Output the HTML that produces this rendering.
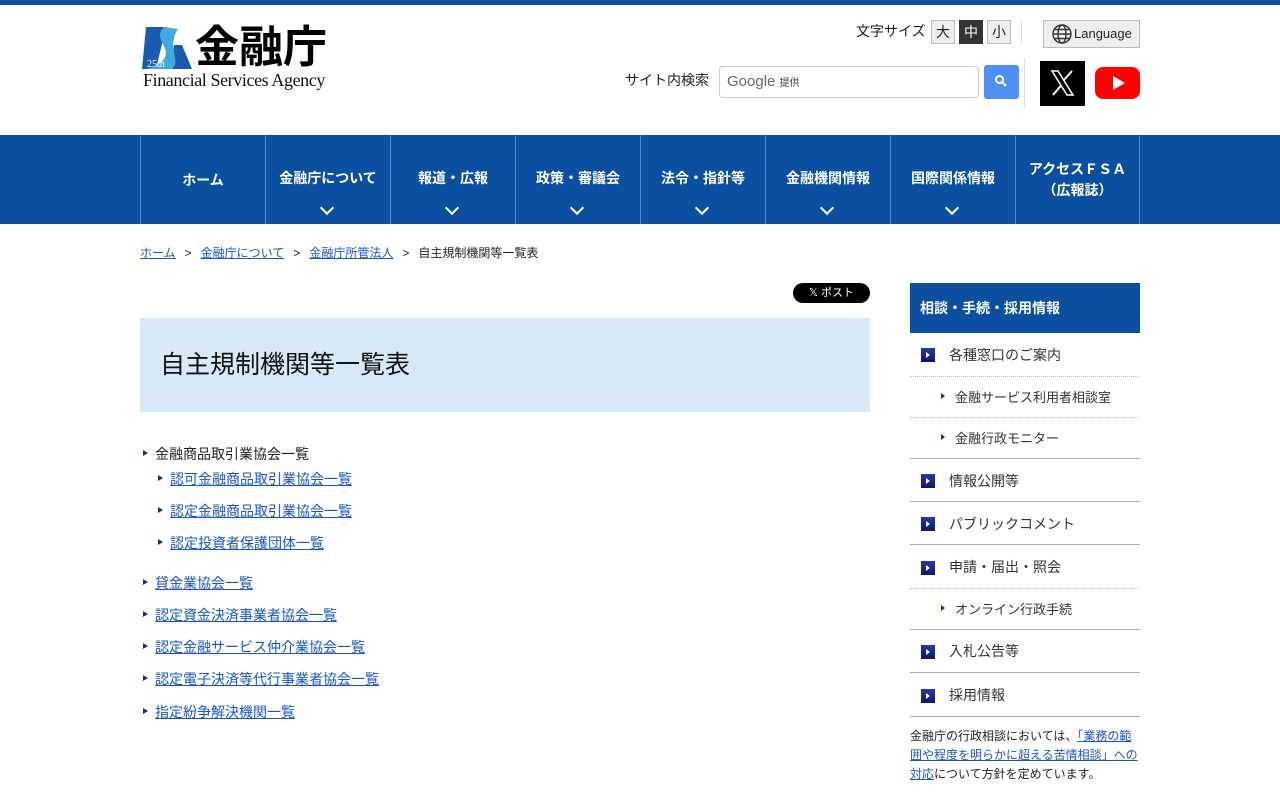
<!DOCTYPE html>
<html><head><meta charset="utf-8"><style>
*{margin:0;padding:0;box-sizing:border-box}
body{width:1280px;height:800px;overflow:hidden;background:#fff;font-family:"Liberation Sans","Noto Sans CJK JP",sans-serif;color:#222;position:relative}
.abs{position:absolute}
a{color:#1a56c8;text-decoration:underline}
.topbar{left:0;top:0;width:1280px;height:5px;background:#0b4fa1}
.nav{left:0;top:135px;width:1280px;height:89px;background:#0b4fa1}
.nav .it{position:absolute;top:0;height:89px;width:125px;border-left:1px solid #5a86c4;color:#fff;font-weight:bold;font-size:14px;text-align:center}
.nav .it span{position:absolute;left:0;right:0;top:34px;line-height:18px}
.chev{position:absolute;left:56px;top:68px;width:10px;height:10px;border-right:2px solid #fff;border-bottom:2px solid #fff;transform:rotate(45deg)}
.fs{top:20px;width:24px;height:24px;border:1px solid #bbb;background:#eee;font-size:14px;text-align:center;line-height:22px}
.tri{display:inline-block;width:0;height:0;border-left:5px solid #1a2a8a;border-top:3.5px solid transparent;border-bottom:3.5px solid transparent;position:absolute}
.li{position:absolute;font-size:14px;line-height:18px}
.sq{position:absolute;left:11px;width:14px;height:14px;background:linear-gradient(#2a3aa8,#0a1470)}
.sq:after{content:"";position:absolute;left:5px;top:4px;border-left:4px solid #fff;border-top:3px solid transparent;border-bottom:3px solid transparent}
.srow{position:absolute;left:910px;width:230px;font-size:14px;color:#333}
</style></head><body>
<div class="abs topbar"></div>
<svg class="abs" style="left:142px;top:25px" width="50" height="46" viewBox="0 0 50 46">
<polygon points="4,2 24,2 14,44 0,44" fill="#1a5bb0"/>
<polygon points="32,20 40,20 50,44 30,44" fill="#1a5bb0"/>
<path d="M22,2 C10,14 30,22 22,34 C18,40 10,42 4,44 L30,44 C40,36 24,22 36,4 Z" fill="#3fa9e0"/>
<text x="5" y="42" font-size="10" fill="#fff" font-family="Liberation Serif">25th</text>
</svg>
<div class="abs" style="left:195px;top:24px;font-size:44px;font-weight:bold;letter-spacing:0px;line-height:48px;color:#000">金融庁</div>
<div class="abs" style="left:143px;top:70px;font-family:'Liberation Serif',serif;font-size:18px;color:#111;letter-spacing:-0.4px;line-height:20px">Financial Services Agency</div>
<div class="abs" style="left:856px;top:21px;font-size:14px">文字サイズ</div>
<div class="abs fs" style="left:931px">大</div>
<div class="abs fs" style="left:959px;background:#333;color:#fff;border-color:#333">中</div>
<div class="abs fs" style="left:987px">小</div>
<div class="abs" style="left:1021px;top:20px;width:1px;height:24px;background:#ddd"></div>
<div class="abs" style="left:1043px;top:20px;width:97px;height:28px;border:1px solid #bbb;background:#eee;font-size:13px;line-height:26px;padding-left:30px">Language</div>
<svg class="abs" style="left:1051px;top:23px" width="22" height="22" viewBox="0 0 22 22" fill="none" stroke="#333" stroke-width="1.4"><circle cx="11" cy="11" r="9"/><ellipse cx="11" cy="11" rx="4" ry="9"/><line x1="2" y1="11" x2="20" y2="11"/><path d="M3.5 6.5h15M3.5 15.5h15"/></svg>
<div class="abs" style="left:625px;top:70px;font-size:14px">サイト内検索</div>
<div class="abs" style="left:719px;top:66px;width:260px;height:32px;border:1px solid #ccc;border-radius:4px;font-size:15px;color:#666;line-height:30px;padding-left:7px">Google <span style="font-size:10px;color:#444">提供</span></div>
<div class="abs" style="left:984px;top:65px;width:35px;height:34px;background:#4d8ff5;border-radius:3px"></div>
<svg class="abs" style="left:994px;top:74px" width="14" height="14" viewBox="0 0 14 14" fill="none" stroke="#fff" stroke-width="2"><circle cx="5.5" cy="5.5" r="3.5"/><line x1="8" y1="8" x2="12" y2="12"/></svg>
<div class="abs" style="left:1024px;top:58px;width:1px;height:50px;background:#ddd"></div>
<div class="abs" style="left:1040px;top:61px;width:45px;height:45px;background:#000"></div>
<svg class="abs" style="left:1050px;top:70px" width="25" height="26" viewBox="0 0 25 26"><path d="M2 1h6l15 24h-6z" fill="none" stroke="#fff" stroke-width="1.5"/><path d="M22 1L14 10M3 25l8-9.5" stroke="#fff" stroke-width="2"/></svg>
<div class="abs" style="left:1095px;top:67px;width:45px;height:32px;background:#f00;border-radius:8px"></div>
<div class="abs" style="left:1113px;top:76px;border-left:12px solid #fff;border-top:7px solid transparent;border-bottom:7px solid transparent"></div>
<div class="abs nav">
<div class="it" style="left:140px"><span style="top:36px">ホーム</span></div>
<div class="it" style="left:265px"><span>金融庁について</span><i class="chev"></i></div>
<div class="it" style="left:390px"><span>報道・広報</span><i class="chev"></i></div>
<div class="it" style="left:515px"><span>政策・審議会</span><i class="chev"></i></div>
<div class="it" style="left:640px"><span>法令・指針等</span><i class="chev"></i></div>
<div class="it" style="left:765px"><span>金融機関情報</span><i class="chev"></i></div>
<div class="it" style="left:890px"><span>国際関係情報</span><i class="chev"></i></div>
<div class="it" style="left:1015px;border-right:1px solid #5a86c4"><span style="top:24px;line-height:21px">アクセスＦＳＡ<br>（広報誌）</span></div>
</div>
<div class="abs" style="left:140px;top:244px;font-size:12px;line-height:18px;color:#222;word-spacing:0"><a href="#">ホーム</a><span style="margin:0 9px">&gt;</span><a href="#">金融庁について</a><span style="margin:0 9px">&gt;</span><a href="#">金融庁所管法人</a><span style="margin:0 9px">&gt;</span>自主規制機関等一覧表</div>
<div class="abs" style="left:793px;top:283px;width:77px;height:20px;background:#000;border-radius:10px;color:#fff;font-size:11px;text-align:center;line-height:20px">𝕏 ポスト</div>
<div class="abs" style="left:140px;top:318px;width:730px;height:94px;background:#d7e8f7"></div>
<div class="abs" style="left:160px;top:350px;font-size:25px;line-height:30px;color:#111">自主規制機関等一覧表</div>
<i class="tri" style="left:143px;top:450px"></i><div class="li" style="left:155px;top:445px">金融商品取引業協会一覧</div>
<i class="tri" style="left:158px;top:475px"></i><div class="li" style="left:170px;top:470px"><a href="#">認可金融商品取引業協会一覧</a></div>
<i class="tri" style="left:158px;top:507px"></i><div class="li" style="left:170px;top:502px"><a href="#">認定金融商品取引業協会一覧</a></div>
<i class="tri" style="left:158px;top:539px"></i><div class="li" style="left:170px;top:534px"><a href="#">認定投資者保護団体一覧</a></div>
<i class="tri" style="left:143px;top:579px"></i><div class="li" style="left:155px;top:574px"><a href="#">貸金業協会一覧</a></div>
<i class="tri" style="left:143px;top:611px"></i><div class="li" style="left:155px;top:606px"><a href="#">認定資金決済事業者協会一覧</a></div>
<i class="tri" style="left:143px;top:643px"></i><div class="li" style="left:155px;top:638px"><a href="#">認定金融サービス仲介業協会一覧</a></div>
<i class="tri" style="left:143px;top:675px"></i><div class="li" style="left:155px;top:670px"><a href="#">認定電子決済等代行事業者協会一覧</a></div>
<i class="tri" style="left:143px;top:708px"></i><div class="li" style="left:155px;top:703px"><a href="#">指定紛争解決機関一覧</a></div>
<div class="abs" style="left:910px;top:283px;width:230px;height:50px;background:#0b4fa1;color:#fff;font-weight:bold;font-size:14px;line-height:50px;padding-left:10px">相談・手続・採用情報</div>
<div class="srow" style="top:333px;height:44px;border-bottom:1px dotted #bbb"><i class="sq" style="top:15px"></i><span class="abs" style="left:39px;top:12px">各種窓口のご案内</span></div>
<div class="srow" style="top:377px;height:41px;border-bottom:1px dotted #bbb;font-size:13px"><i class="tri" style="left:31px;top:16px;border-left-width:4px"></i><span class="abs" style="left:45px;top:10px">金融サービス利用者相談室</span></div>
<div class="srow" style="top:418px;height:41px;border-bottom:1px solid #aaa;font-size:13px"><i class="tri" style="left:31px;top:16px;border-left-width:4px"></i><span class="abs" style="left:45px;top:10px">金融行政モニター</span></div>
<div class="srow" style="top:459px;height:43px;border-bottom:1px solid #aaa"><i class="sq" style="top:15px"></i><span class="abs" style="left:39px;top:12px">情報公開等</span></div>
<div class="srow" style="top:502px;height:43px;border-bottom:1px solid #aaa"><i class="sq" style="top:15px"></i><span class="abs" style="left:39px;top:12px">パブリックコメント</span></div>
<div class="srow" style="top:545px;height:44px;border-bottom:1px dotted #bbb"><i class="sq" style="top:16px"></i><span class="abs" style="left:39px;top:12px">申請・届出・照会</span></div>
<div class="srow" style="top:589px;height:41px;border-bottom:1px solid #aaa;font-size:13px"><i class="tri" style="left:31px;top:16px;border-left-width:4px"></i><span class="abs" style="left:45px;top:10px">オンライン行政手続</span></div>
<div class="srow" style="top:630px;height:43px;border-bottom:1px solid #aaa"><i class="sq" style="top:15px"></i><span class="abs" style="left:39px;top:11px">入札公告等</span></div>
<div class="srow" style="top:673px;height:44px;border-bottom:1px solid #aaa"><i class="sq" style="top:16px"></i><span class="abs" style="left:39px;top:12px">採用情報</span></div>
<div class="abs" style="left:910px;top:727px;width:232px;font-size:12px;line-height:19px;color:#222">金融庁の行政相談においては、<a href="#">「業務の範囲や程度を明らかに超える苦情相談」への対応</a>について方針を定めています。</div>
</body></html>
